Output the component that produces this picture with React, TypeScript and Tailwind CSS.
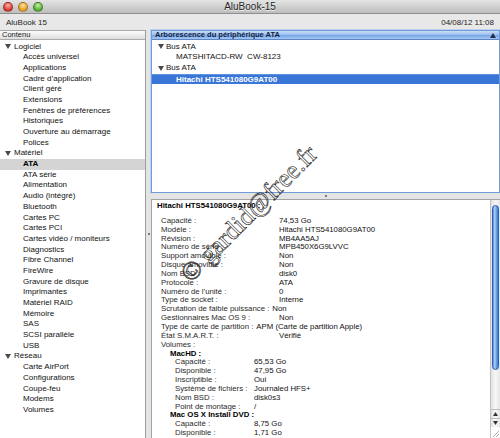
import React from "react"

const software = [
  "Accès universel",
  "Applications",
  "Cadre d’application",
  "Client géré",
  "Extensions",
  "Fenêtres de préférences",
  "Historiques",
  "Ouverture au démarrage",
  "Polices",
]

const hardware = [
  "ATA",
  "ATA série",
  "Alimentation",
  "Audio (intégré)",
  "Bluetooth",
  "Cartes PC",
  "Cartes PCI",
  "Cartes vidéo / moniteurs",
  "Diagnostics",
  "Fibre Channel",
  "FireWire",
  "Gravure de disque",
  "Imprimantes",
  "Matériel RAID",
  "Mémoire",
  "SAS",
  "SCSI parallèle",
  "USB",
]

const network = ["Carte AirPort", "Configurations", "Coupe-feu", "Modems", "Volumes"]

const groups = [
  { label: "Logiciel", items: software },
  { label: "Matériel", items: hardware },
  { label: "Réseau", items: network },
]

// long labels push their value to the right instead of using the column
const details: { label: string; value: string; long?: boolean }[] = [
  { label: "Capacité :", value: "74,53 Go" },
  { label: "Modèle :", value: "Hitachi HTS541080G9AT00" },
  { label: "Révision :", value: "MB4AA5AJ" },
  { label: "Numéro de série :", value: "MPB450X6G9LVVC" },
  { label: "Support amovible :", value: "Non" },
  { label: "Disque amovible :", value: "Non" },
  { label: "Nom BSD :", value: "disk0" },
  { label: "Protocole :", value: "ATA" },
  { label: "Numéro de l’unité :", value: "0" },
  { label: "Type de socket :", value: "Interne" },
  { label: "Scrutation de faible puissance :", value: "Non", long: true },
  { label: "Gestionnaires Mac OS 9 :", value: "Non" },
  { label: "Type de carte de partition :", value: "APM (Carte de partition Apple)", long: true },
  { label: "État S.M.A.R.T. :", value: "Vérifié" },
]

const volumes = [
  {
    name: "MacHD :",
    rows: [
      ["Capacité :", "65,53 Go"],
      ["Disponible :", "47,95 Go"],
      ["Inscriptible :", "Oui"],
      ["Système de fichiers :", "Journaled HFS+"],
      ["Nom BSD :", "disk0s3"],
      ["Point de montage :", "/"],
    ],
  },
  {
    name: "Mac OS X Install DVD :",
    rows: [
      ["Capacité :", "8,75 Go"],
      ["Disponible :", "1,71 Go"],
    ],
  },
]

const Triangle = ({ color = "#4a4a4a" }: { color?: string }) => (
  <svg width="6" height="5" viewBox="0 0 6 5" className="shrink-0">
    <polygon points="0,0 6,0 3,5" fill={color} />
  </svg>
)

const Light = ({ from, to }: { from: string; to: string }) => (
  <span
    className="block h-[10px] w-[10px] rounded-full border border-black/30"
    style={{ background: `radial-gradient(circle at 50% 30%, ${from}, ${to} 70%)` }}
  />
)

function TitleBar() {
  return (
    <div className="grid h-[14px] grid-cols-[1fr_auto_1fr] items-center border-b border-[#8f8f8f] bg-[linear-gradient(#e4e4e4,#bdbdbd)]">
      <div className="flex items-center gap-[5px] pl-[3px]">
        <Light from="#ffb3a8" to="#d8322a" />
        <Light from="#ffe3a0" to="#e49a1c" />
        <Light from="#c8f0a4" to="#4faa2f" />
      </div>
      <span className="text-[10px] leading-none text-[#262626] [text-shadow:0_1px_0_#f0f0f0]">AluBook-15</span>
      <span />
    </div>
  )
}

function Toolbar() {
  return (
    <div className="flex h-[16px] items-center justify-between bg-[#e8e8e8] px-[6px] pt-[1px] text-[8px] text-[#1e1e1e]">
      <span>AluBook 15</span>
      <span>04/08/12 11:08</span>
    </div>
  )
}

function Sidebar() {
  return (
    <div className="flex w-[146px] shrink-0 flex-col border-r border-[#9d9d9d] bg-white">
      <div className="h-[10px] border-y border-[#a9a9a9] bg-[linear-gradient(#fbfbfb,#dedede)] pl-[2px] text-[7.5px] leading-[8px] text-[#1a1a1a]">
        Contenu
      </div>
      <div className="pt-[1.5px] text-[8px] leading-[10.7px] text-[#111]">
        {groups.map((g) => (
          <div key={g.label}>
            <div className="flex h-[10.7px] items-center gap-[3px] pl-[5px]">
              <Triangle />
              <span>{g.label}</span>
            </div>
            {g.items.map((item) => (
              <div
                key={item}
                className={
                  item === "ATA"
                    ? "h-[10.7px] bg-[#d4d4d4] pl-[23px] font-bold text-black"
                    : "h-[10.7px] pl-[23px]"
                }
              >
                {item}
              </div>
            ))}
          </div>
        ))}
      </div>
    </div>
  )
}

function DeviceTree() {
  return (
    <div className="flex h-[163px] shrink-0 flex-col border border-[#6f9bd9] bg-white shadow-[0_0_0_1px_#bcd1ef]">
      <div className="flex h-[9px] items-center justify-between border-b border-[#5b87c9] bg-[linear-gradient(#c9dcf6,#9fc0ef_45%,#77a6e7_55%,#a8c7f1)] pl-[3px] pr-[3px] text-[7.5px] font-bold text-[#10243f]">
        <span className="leading-none">Arborescence du périphérique ATA</span>
        <svg width="6" height="5" viewBox="0 0 6 5">
          <polygon points="3,0 6,5 0,5" fill="#1f2f48" />
        </svg>
      </div>
      <div className="pt-[1.5px] text-[8px] leading-[10.7px] text-[#111]">
        <div className="flex h-[10.7px] items-center gap-[2px] pl-[6px]">
          <Triangle />
          <span>Bus ATA</span>
        </div>
        <div className="h-[10.7px] whitespace-pre pl-[24px]">MATSHITACD-RW  CW-8123</div>
        <div className="flex h-[10.7px] items-center gap-[2px] pl-[6px]">
          <Triangle />
          <span>Bus ATA</span>
        </div>
        <div className="h-[10.7px] border-t border-[#5d92e0] bg-[#3a76d8] pl-[24px] leading-[9.7px] font-bold text-white">
          Hitachi HTS541080G9AT00
        </div>
      </div>
    </div>
  )
}

function Scrollbar() {
  return (
    <div className="flex w-[10px] shrink-0 flex-col border-l border-[#c2c2c2] bg-[linear-gradient(to_right,#e2e2e2,#f7f7f7_50%,#e6e6e6)]">
      <div className="flex-1 px-[1px] pt-[5px]">
        <div className="h-[165px] rounded-full border border-[#2d5fb0] bg-[linear-gradient(to_right,#4d86d8,#b7d3f7_35%,#7fb0ee_55%,#3a78d6)]" />
      </div>
      <div className="flex h-[9px] items-center justify-center border-t border-[#bdbdbd]">
        <svg width="5" height="4" viewBox="0 0 5 4">
          <polygon points="2.5,0 5,4 0,4" fill="#333" />
        </svg>
      </div>
      <div className="flex h-[9px] items-center justify-center border-t border-[#bdbdbd]">
        <svg width="5" height="4" viewBox="0 0 5 4">
          <polygon points="0,0 5,0 2.5,4" fill="#333" />
        </svg>
      </div>
      <div className="flex h-[11px] items-end justify-end bg-white">
        <svg width="9" height="9" viewBox="0 0 9 9">
          <path d="M8 2 L2 8 M8 5 L5 8" stroke="#999" strokeWidth="0.8" />
        </svg>
      </div>
    </div>
  )
}

function Details() {
  return (
    <div className="flex min-h-0 flex-1 border-t border-l border-[#a3a3a3] bg-white">
      <div className="flex-1 overflow-hidden pl-[5px] pt-[2px] text-[7.8px] leading-[8.85px] text-[#111]">
        <div className="font-bold text-black">Hitachi HTS541080G9AT00 :</div>
        <div className="mt-[6px] pl-[4px]">
          {details.map((d) => (
            <div key={d.label} className="flex whitespace-nowrap">
              <span className={d.long ? "shrink-0 pr-[3px] text-[#2a2a2a]" : "w-[118px] shrink-0 text-[#2a2a2a]"}>
                {d.label}
              </span>
              <span>{d.value}</span>
            </div>
          ))}
          <div className="text-[#2a2a2a]">Volumes :</div>
          {volumes.map((v) => (
            <div key={v.name}>
              <div className="pl-[9px] font-bold text-black">{v.name}</div>
              {v.rows.map(([l, val]) => (
                <div key={l} className="flex whitespace-nowrap pl-[14px]">
                  <span className="w-[79px] shrink-0 text-[#2a2a2a]">{l}</span>
                  <span>{val}</span>
                </div>
              ))}
            </div>
          ))}
        </div>
      </div>
      <Scrollbar />
    </div>
  )
}

export default function App() {
  return (
    <div className="relative flex h-[438px] w-[500px] flex-col overflow-hidden bg-[#e6e6e6] font-['Liberation_Sans',Arial,sans-serif]">
      <TitleBar />
      <Toolbar />
      <div className="flex min-h-0 flex-1">
        <Sidebar />
        {/* vertical splitter */}
        <div className="flex w-[5px] shrink-0 items-center justify-center bg-[#e4e4e4]">
          <span className="h-[2px] w-[2px] rounded-full bg-[#555]" />
        </div>
        <div className="flex min-w-0 flex-1 flex-col">
          <DeviceTree />
          {/* horizontal splitter */}
          <div className="flex h-[6px] shrink-0 items-center justify-center bg-[#e4e4e4]">
            <span className="h-[2px] w-[2px] rounded-full bg-[#555]" />
          </div>
          <Details />
        </div>
      </div>

      {/* copyright watermark over the screenshot */}
      <div className="pointer-events-none absolute left-[249px] top-[214px] -translate-x-1/2 -translate-y-1/2 -rotate-45 whitespace-nowrap font-['Liberation_Serif',serif] text-[26px] leading-none text-transparent [-webkit-text-stroke:0.6px_#1a1a1a]">
        © gardid@free.fr
      </div>
    </div>
  )
}
